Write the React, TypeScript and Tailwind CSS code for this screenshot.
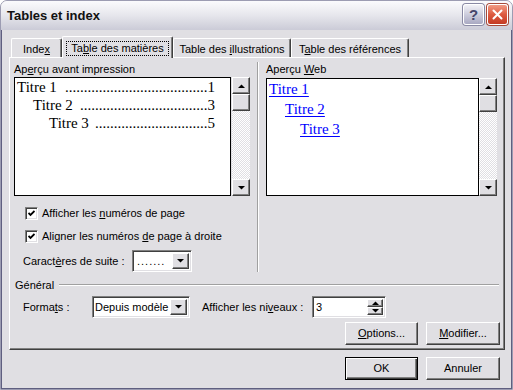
import type { ReactNode } from "react";

const ui = "[font-family:'Liberation_Sans',Arial,sans-serif] text-[11px] text-black";
const serif = "[font-family:'Liberation_Serif','Times_New_Roman',serif]";

const raised =
  "border border-t-white border-l-white border-r-[#404040] border-b-[#404040] shadow-[inset_-1px_-1px_0_#808080] bg-[#e0dfe3]";
const sunken =
  "border border-t-[#808080] border-l-[#808080] border-r-white border-b-white shadow-[inset_1px_1px_0_#404040,inset_-1px_-1px_0_#e0dfe3]";

// access key letter
function K({ children }: { children: ReactNode }) {
  return <span className="underline underline-offset-[1px]">{children}</span>;
}

function Arrow({ dir }: { dir: "up" | "down" }) {
  return (
    <svg width="7" height="4" viewBox="0 0 7 4">
      {dir === "up" ? <polygon points="0,4 7,4 3.5,0.5" fill="black" /> : <polygon points="0,0 7,0 3.5,3.5" fill="black" />}
    </svg>
  );
}

function ScrollBar() {
  return (
    <div className="w-[18px] flex flex-col">
      <div className={`h-[17px] ${raised} flex items-center justify-center`}>
        <Arrow dir="up" />
      </div>
      <div className={`h-[17px] ${raised}`} />
      <div className="flex-1 bg-[image:repeating-conic-gradient(#ffffff_0_25%,#e0dfe3_0_50%)] bg-[length:2px_2px]" />
      <div className={`h-[17px] ${raised} flex items-center justify-center`}>
        <Arrow dir="down" />
      </div>
    </div>
  );
}

function Check({ children }: { children: ReactNode }) {
  return (
    <div className="h-[23px] flex items-center pl-[11px]">
      <div className={`w-[13px] h-[13px] bg-white ${sunken} flex items-center justify-center`}>
        <svg width="7" height="7" viewBox="0 0 7 7">
          <polyline points="0.5,3 2.5,5 6.5,1" stroke="black" strokeWidth="1.8" fill="none" />
        </svg>
      </div>
      <span className="ml-[4px] leading-[13px]">{children}</span>
    </div>
  );
}

function Combo({ w, children }: { w: string; children: ReactNode }) {
  return (
    <div className={`${w} h-[22px] bg-white ${sunken} flex items-stretch p-[2px]`}>
      <div className="flex-1 min-w-0 flex items-center leading-[13px] whitespace-nowrap overflow-hidden">
        <span>{children}</span>
      </div>
      <div className={`w-[17px] ${raised} flex items-center justify-center`}>
        <Arrow dir="down" />
      </div>
    </div>
  );
}

function Btn({ w, def, children }: { w: string; def?: boolean; children: ReactNode }) {
  const look = def
    ? "border border-black bg-[#e0dfe3] shadow-[inset_1px_1px_0_#fff,inset_-1px_-1px_0_#404040,inset_-2px_-2px_0_#808080]"
    : raised;
  return (
    <div className={`${w} h-[23px] ${look} flex items-center justify-center leading-[13px]`}>
      <span>{children}</span>
    </div>
  );
}

function Tab({ w, active, children }: { w: string; active?: boolean; children: ReactNode }) {
  if (active) {
    return (
      <div
        className={`${w} relative z-10 -mb-px h-[22px] bg-[#e0dfe3] border-l border-t border-r border-white border-r-[#404040] rounded-t-[2px] shadow-[inset_-1px_0_0_#808080] flex justify-center pt-[4px]`}
      >
        <span className="h-[15px] border border-dotted border-black px-[4px] leading-[13px] whitespace-nowrap">{children}</span>
      </div>
    );
  }
  return (
    <div
      className={`${w} h-[19px] border-l border-t border-r border-white border-r-[#404040] rounded-t-[2px] shadow-[inset_-1px_0_0_#808080] flex justify-center pt-[4px] leading-[13px]`}
    >
      <span className="whitespace-nowrap">{children}</span>
    </div>
  );
}

function TocLine({ pad, name, page, dots }: { pad: string; name: string; page: string; dots: number }) {
  return (
    <div className={`h-[18px] flex items-center ${pad} pr-[15px] text-[15px] leading-[18px] ${serif}`}>
      <span className="whitespace-nowrap">{name}</span>
      <span className="ml-[3px] flex-1 min-w-0 text-right whitespace-nowrap overflow-hidden">{".".repeat(dots)}</span>
      <span>{page}</span>
    </div>
  );
}

function WebLine({ pad, name }: { pad: string; name: string }) {
  return (
    <div className={`h-[20px] flex items-center ${pad} text-[15px] ${serif}`}>
      <span className="text-[#0000ff] underline underline-offset-[2px]">{name}</span>
    </div>
  );
}

function TitleBar() {
  return (
    <div className="h-[29px] flex items-start bg-linear-to-b from-[#fbfbfd] via-[#e6e6ec] to-[#cbcbd7] pl-[6px] pr-[4px]">
      <div className="mt-[7px] text-[13px] font-bold leading-[16px] text-[#111]">Tables et index</div>
      <div className="flex-1" />
      <div className="mt-[3px] w-[21px] h-[21px] rounded-[3px] border border-white ring-1 ring-[#8a8aa4] bg-linear-to-b from-[#f2f2f7] to-[#a9a9c2] flex items-center justify-center text-[15px] font-bold text-[#45456a] leading-none">
        ?
      </div>
      <div className="ml-[3px] mt-[3px] w-[21px] h-[21px] rounded-[3px] border border-white ring-1 ring-[#a54a3a] bg-linear-to-b from-[#f09a84] via-[#dd5a40] to-[#c43a24] flex items-center justify-center">
        <svg width="11" height="11" viewBox="0 0 11 11">
          <path d="M1.5 1.5 L9.5 9.5 M9.5 1.5 L1.5 9.5" stroke="white" strokeWidth="2" strokeLinecap="round" />
        </svg>
      </div>
    </div>
  );
}

export default function App() {
  return (
    <div className={`w-[513px] h-[390px] flex flex-col rounded-t-[7px] overflow-hidden border border-[#9c9cb2] bg-[#e0dfe3] ${ui}`}>
      <TitleBar />
      <div className="flex-1 flex flex-col border-x border-b border-[#5f5f80] pl-[7px] pr-[6px] pt-[6px]">
        {/* tabs */}
        <div className="flex items-end h-[21px] pl-[2px]">
          <Tab w="w-[51px]">
            Inde<K>x</K>
          </Tab>
          <Tab w="w-[111px]" active>
            Ta<K>b</K>le des matières
          </Tab>
          <Tab w="w-[118px]">
            Table des <K>i</K>llustrations
          </Tab>
          <Tab w="w-[118px]">
            T<K>a</K>ble des références
          </Tab>
        </div>

        {/* panel */}
        <div className="h-[293px] w-[496px] border-l border-t border-white border-r border-b border-r-[#404040] border-b-[#404040] shadow-[inset_-1px_-1px_0_#808080] flex flex-col pt-[4px]">
          <div className="flex">
            <div className="ml-[4px] w-[236px] flex flex-col">
              <div className="h-[14px] leading-[14px]">
                Ap<K>e</K>rçu avant impression
              </div>
              <div className="mt-[1px] h-[119px] flex gap-[1px]">
                <div className="w-[217px] bg-white border border-black pl-[2px]">
                  <TocLine pad="pl-0" name="Titre 1" page="1" dots={38} />
                  <TocLine pad="pl-[16px]" name="Titre 2" page="3" dots={34} />
                  <TocLine pad="pl-[32px]" name="Titre 3" page="5" dots={30} />
                </div>
                <ScrollBar />
              </div>
              <div className="mt-[6px]">
                <Check>
                  Afficher les <K>n</K>uméros de page
                </Check>
                <Check>
                  Aligner les numéros <K>d</K>e page à droite
                </Check>
              </div>
              <div className="mt-[2px] flex items-center pl-[9px]">
                <span className="w-[109px] leading-[13px]">
                  Caract<K>è</K>res de suite :
                </span>
                <Combo w="w-[60px]">
                  <span className="pl-[2px] tracking-[1px]">.......</span>
                </Combo>
              </div>
            </div>

            <div className="ml-[7px] w-[2px] border-l border-[#a0a0a0] border-r border-r-white" />

            <div className="ml-[7px] w-[231px] flex flex-col">
              <div className="h-[14px] leading-[14px]">
                Aperçu <K>W</K>eb
              </div>
              <div className="mt-[2px] h-[118px] flex">
                <div className="w-[213px] bg-white border border-black pl-[2px]">
                  <WebLine pad="pl-0" name="Titre 1" />
                  <WebLine pad="pl-[16px]" name="Titre 2" />
                  <WebLine pad="pl-[31px]" name="Titre 3" />
                </div>
                <ScrollBar />
              </div>
            </div>
          </div>

          {/* Général */}
          <div className="mt-[6px] h-[14px] flex items-center pl-[5px] pr-[5px]">
            <span className="leading-[14px]">Général</span>
            <div className="ml-[5px] flex-1 h-[2px] border-t border-[#a0a0a0] border-b border-b-white" />
          </div>
          <div className="mt-[4px] flex items-center pl-[13px]">
            <span className="w-[69px] leading-[13px]">
              Forma<K>t</K>s :
            </span>
            <Combo w="w-[98px]">Depuis modèle</Combo>
            <span className="ml-[12px] w-[110px] leading-[13px]">
              Afficher les ni<K>v</K>eaux :
            </span>
            <div className={`w-[74px] h-[22px] bg-white ${sunken} flex items-stretch p-[2px]`}>
              <div className="flex-1 flex items-center pl-[1px] leading-[13px]">3</div>
              <div className="w-[16px] flex flex-col">
                <div className={`flex-1 ${raised} flex items-center justify-center`}>
                  <Arrow dir="up" />
                </div>
                <div className={`flex-1 ${raised} flex items-center justify-center`}>
                  <Arrow dir="down" />
                </div>
              </div>
            </div>
          </div>
          <div className="mt-[4px] flex justify-end gap-[8px] pr-[4px]">
            <Btn w="w-[73px]">
              <K>O</K>ptions...
            </Btn>
            <Btn w="w-[74px]">
              <K>M</K>odifier...
            </Btn>
          </div>
        </div>

        <div className="mt-[7px] flex justify-end gap-[8px] pr-[5px]">
          <Btn w="w-[73px]" def>
            OK
          </Btn>
          <Btn w="w-[74px]">Annuler</Btn>
        </div>
      </div>
    </div>
  );
}
